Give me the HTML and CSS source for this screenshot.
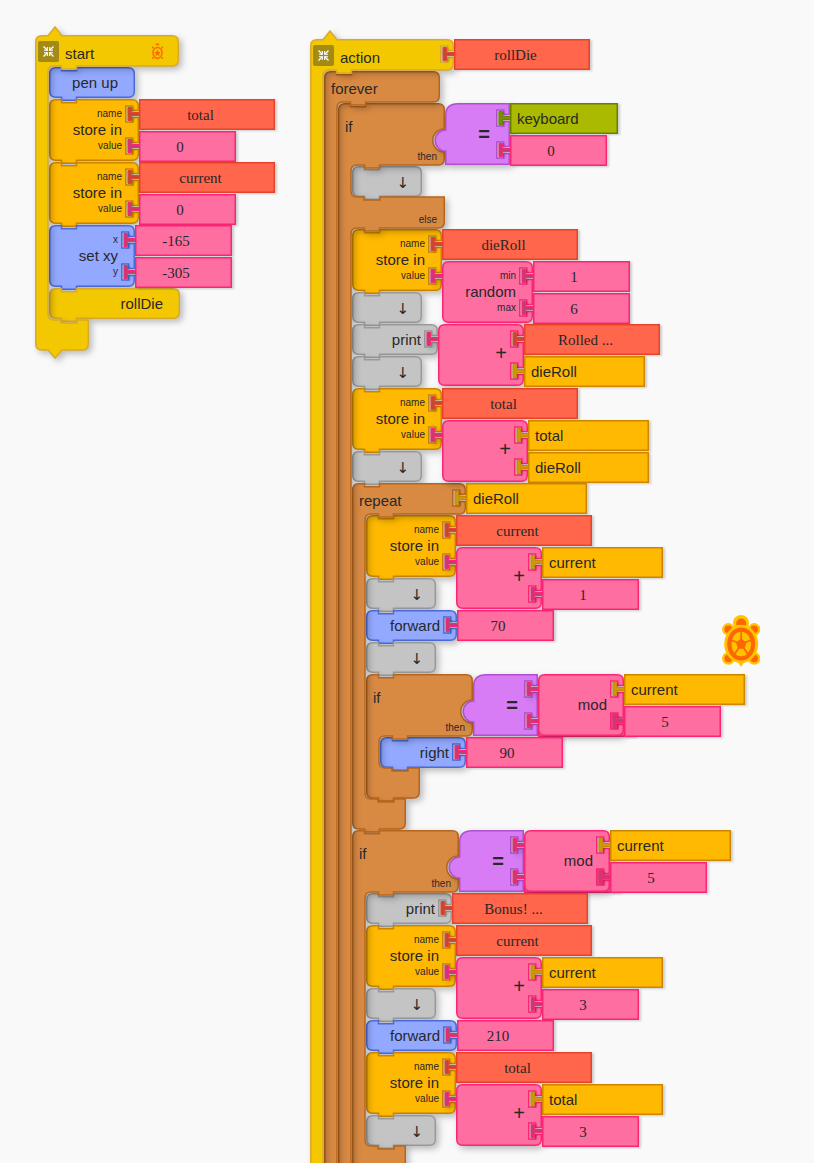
FILE: index.html
```html
<!DOCTYPE html>
<html lang="en">
<head>
<meta charset="utf-8">
<title>Block program</title>
<link rel="stylesheet" href="styles.css">
</head>
<body>
<svg class="defs" aria-hidden="true">
  <symbol id="shrink" viewBox="0 0 21 21">
    <path d="M5.500 5.500l4 4M15.500 5.500l-4 4M5.500 15.500l4-4M15.500 15.500l-4-4" stroke="#fff" stroke-width="1.300" fill="none"/>
    <path d="M9.300 6v3.300H6M11.700 6v3.300H15M9.300 15v-3.300H6M11.700 15v-3.300H15" stroke="#fff" stroke-width="1.100" fill="none"/>
  </symbol>
  <symbol id="mini-turtle" viewBox="0 0 38 52">
    <g fill="#ff6a00">
      <path d="M13 7a6 6 0 0 1 12 0z"/>
      <circle cx="4.500" cy="13.500" r="3"/><circle cx="33.500" cy="13.500" r="3"/>
      <circle cx="4.500" cy="46" r="3"/><circle cx="33.500" cy="46" r="3"/>
      <path d="M16 47h6l-3 5z"/>
    </g>
    <ellipse cx="19" cy="30" rx="14" ry="16.500" fill="none" stroke="#ff6a00" stroke-width="4.500"/>
    <path d="M19 21l3 6 6 1-4 5 1 7-6-3-6 3 1-7-4-5 6-1z" fill="#ff6a00"/>
  </symbol>
</svg>

<main class="canvas">
  <section class="program program-start">
    <div class="clamp hat gold">
      <div class="head block">
        <div class="face top w144">
          <button class="fold" type="button" aria-label="Collapse start"><svg><use href="#shrink"/></svg></button>
          <span>start</span>
          <svg class="mark" aria-hidden="true"><use href="#mini-turtle"/></svg>
        </div>
      </div>
      <div class="stack">
        <div class="block blue"><div class="face w86">pen up</div></div>
        <div class="block tall amber"><div class="face w90"><small>name</small><span>store in</span><small>value</small></div>
          <div class="args"><div class="value text"><span>total</span></div><div class="value number"><span>0</span></div></div></div>
        <div class="block tall amber"><div class="face w90"><small>name</small><span>store in</span><small>value</small></div>
          <div class="args"><div class="value text"><span>current</span></div><div class="value number"><span>0</span></div></div></div>
        <div class="block tall blue"><div class="face w86"><small>x</small><span>set xy</span><small>y</small></div>
          <div class="args"><div class="value number"><span>-165</span></div><div class="value number"><span>-305</span></div></div></div>
        <div class="block gold"><div class="face w131">rollDie</div></div>
      </div>
      <div class="foot"></div>
    </div>
  </section>

  <section class="program program-action">
    <div class="clamp hat gold">
      <div class="head block">
        <div class="face top w144">
          <button class="fold" type="button" aria-label="Collapse action"><svg><use href="#shrink"/></svg></button>
          <span>action</span>
        </div>
        <div class="args"><div class="value text"><span>rollDie</span></div></div>
      </div>
      <div class="stack">
        <div class="clamp brown">
          <div class="head block"><div class="face flow w116">forever</div></div>
          <div class="stack">
            <div class="clamp brown">
              <div class="head block tall"><div class="face cond w107"><span>if</span><small>then</small></div>
                <div class="args"><div class="block tall logic purple"><div class="face w65 sign">=</div>
                  <div class="args"><div class="value sensor"><span>keyboard</span></div><div class="value number"><span>0</span></div></div></div></div></div>
              <div class="stack">
                <div class="block grey short"><div class="face w70 arrow">↓</div></div>
              </div>
              <div class="mid block"><div class="face w107"><small>else</small></div></div>
              <div class="stack">
                <div class="block tall amber"><div class="face w90"><small>name</small><span>store in</span><small>value</small></div>
                  <div class="args"><div class="value text"><span>dieRoll</span></div>
                    <div class="block tall pink"><div class="face w91"><small>min</small><span>random</span><small>max</small></div>
                      <div class="args"><div class="value number"><span>1</span></div><div class="value number"><span>6</span></div></div></div></div></div>
                <div class="block grey"><div class="face w70 arrow">↓</div></div>
                <div class="block grey"><div class="face w86">print</div>
                  <div class="args"><div class="block tall pink"><div class="face w86 plus">+</div>
                    <div class="args"><div class="value text"><span>Rolled ...</span></div><div class="value box"><span>dieRoll</span></div></div></div></div></div>
                <div class="block grey"><div class="face w70 arrow">↓</div></div>
                <div class="block tall amber"><div class="face w90"><small>name</small><span>store in</span><small>value</small></div>
                  <div class="args"><div class="value text"><span>total</span></div>
                    <div class="block tall pink"><div class="face w86 plus">+</div>
                      <div class="args"><div class="value box"><span>total</span></div><div class="value box"><span>dieRoll</span></div></div></div></div></div>
                <div class="block grey"><div class="face w70 arrow">↓</div></div>
                <div class="clamp brown">
                  <div class="head block"><div class="face flow w114">repeat</div>
                    <div class="args"><div class="value box"><span>dieRoll</span></div></div></div>
                  <div class="stack">
                    <div class="block tall amber"><div class="face w90"><small>name</small><span>store in</span><small>value</small></div>
                      <div class="args"><div class="value text"><span>current</span></div>
                        <div class="block tall pink"><div class="face w86 plus">+</div>
                          <div class="args"><div class="value box"><span>current</span></div><div class="value number"><span>1</span></div></div></div></div></div>
                    <div class="block grey"><div class="face w70 arrow">↓</div></div>
                    <div class="block blue"><div class="face w91">forward</div>
                      <div class="args"><div class="value number"><span>70</span></div></div></div>
                    <div class="block grey"><div class="face w70 arrow">↓</div></div>
                    <div class="clamp brown">
                      <div class="head block tall"><div class="face cond w107"><span>if</span><small>then</small></div>
                        <div class="args"><div class="block tall logic purple"><div class="face w65 sign">=</div>
                          <div class="args"><div class="block tall pink"><div class="face w86">mod</div>
                            <div class="args"><div class="value box"><span>current</span></div><div class="value number"><span>5</span></div></div></div>
                            <div class="value number"></div></div></div></div></div>
                      <div class="stack">
                        <div class="block blue short"><div class="face w86">right</div>
                          <div class="args"><div class="value number"><span>90</span></div></div></div>
                      </div>
                      <div class="foot"></div>
                    </div>
                  </div>
                  <div class="foot"></div>
                </div>
                <div class="clamp brown">
                  <div class="head block tall"><div class="face cond w107"><span>if</span><small>then</small></div>
                    <div class="args"><div class="block tall logic purple"><div class="face w65 sign">=</div>
                      <div class="args"><div class="block tall pink"><div class="face w86">mod</div>
                        <div class="args"><div class="value box"><span>current</span></div><div class="value number"><span>5</span></div></div></div>
                        <div class="value number"></div></div></div></div></div>
                  <div class="stack">
                    <div class="block grey"><div class="face w86">print</div>
                      <div class="args"><div class="value text"><span>Bonus! ...</span></div></div></div>
                    <div class="block tall amber"><div class="face w90"><small>name</small><span>store in</span><small>value</small></div>
                      <div class="args"><div class="value text"><span>current</span></div>
                        <div class="block tall pink"><div class="face w86 plus">+</div>
                          <div class="args"><div class="value box"><span>current</span></div><div class="value number"><span>3</span></div></div></div></div></div>
                    <div class="block grey"><div class="face w70 arrow">↓</div></div>
                    <div class="block blue"><div class="face w91">forward</div>
                      <div class="args"><div class="value number"><span>210</span></div></div></div>
                    <div class="block tall amber"><div class="face w90"><small>name</small><span>store in</span><small>value</small></div>
                      <div class="args"><div class="value text"><span>total</span></div>
                        <div class="block tall pink"><div class="face w86 plus">+</div>
                          <div class="args"><div class="value box"><span>total</span></div><div class="value number"><span>3</span></div></div></div></div></div>
                    <div class="block grey short"><div class="face w70 arrow">↓</div></div>
                  </div>
                  <div class="foot"></div>
                </div>
              </div>
              <div class="foot"></div>
            </div>
          </div>
          <div class="foot"></div>
        </div>
      </div>
      <div class="foot"></div>
    </div>
  </section>

  <svg class="turtle" viewBox="0 0 38 53" role="img" aria-label="Turtle">
    <g fill="#ffc300">
      <circle cx="19" cy="9" r="8"/>
      <circle cx="6.300" cy="15.300" r="6.200"/><circle cx="32.200" cy="15.300" r="6.200"/>
      <circle cx="6.300" cy="44.500" r="6.200"/><circle cx="32.200" cy="44.500" r="6.200"/>
      <path d="M15 47h8l-4 6z"/>
    </g>
    <g fill="#ff6600">
      <circle cx="19.200" cy="9.500" r="5"/>
      <circle cx="6.300" cy="15.300" r="3.800"/><circle cx="32.200" cy="15.300" r="3.800"/>
      <circle cx="6.300" cy="44.500" r="3.800"/><circle cx="32.200" cy="44.500" r="3.800"/>
    </g>
    <ellipse cx="19.200" cy="30" rx="17" ry="19.200" fill="#ffc300"/>
    <ellipse cx="19.200" cy="30" rx="14" ry="16.600" fill="#ff6600"/>
    <ellipse cx="19.200" cy="30" rx="9.800" ry="12.200" fill="#ffc300"/>
    <path d="M19.200 24.500l5.200 4-2 6.200h-6.400l-2-6.200z" fill="#ff6600"/>
    <path d="M19.200 30V17M19.200 30L9 26M19.200 30l10.200-4M19.200 30l-6.500 10M19.200 30l6.500 10" stroke="#ff6600" stroke-width="1.700"/>
  </svg>
</main>
<script src="outlines.js"></script>
</body>
</html>
```

FILE: styles.css
```css
* { box-sizing: border-box; }

body {
  margin: 0;
  background: #f9f9f9;
  color: #282828;
  font: 15px/18px "Liberation Sans", Arial, sans-serif;
}

.defs { position: absolute; width: 0; height: 0; }

.canvas {
  position: relative;
  height: 100vh;
  overflow: hidden;
}

/* Stacks and the turtle sit freely on the canvas. */
.program { position: absolute; width: max-content; }
.program-start { left: 35px; top: 35px; }
.program-action { left: 310px; top: 39px; }
.turtle { position: absolute; left: 722px; top: 614px; width: 38px; height: 53px; }

/* Palette */
.gold { --fill: #f3c800; --line: #d8a92c; }
.amber { --fill: #ffb900; --line: #c98500; }
.blue { --fill: #92a9ff; --line: #4a6bd9; }
.brown { --fill: #d88a43; --line: #b5651d; }
.grey { --fill: #c4c4c4; --line: #999; }
.purple { --fill: #d77cf5; --line: #b04fd0; }
.pink, .number { --fill: #ff6ea1; --line: #fb2576; --dark: #c93a72; }
.text { --fill: #ff664b; --line: #e8432a; --dark: #c24a35; }
.box { --fill: #ffb900; --line: #cc8600; --dark: #c99a10; }
.sensor { --fill: #a9ba00; --line: #6c8000; --dark: #7d8f00; }

/* Blocks */
.block {
  display: flex;
  align-items: flex-start;
  position: relative;
  height: 32px;
}
.short { height: 31px; }
.tall { height: 63px; }

.face {
  position: relative;
  z-index: 1;
  flex: none;
  display: flex;
  flex-direction: column;
  justify-content: center;
  align-items: flex-end;
  height: 31px;
  padding-right: 17px;
  white-space: nowrap;
}
.tall > .face { height: 61px; }
.face small { font-size: 10px; line-height: 12px; }
.face small + span { line-height: 20px; }

.face.top {
  flex-direction: row;
  align-items: center;
  justify-content: flex-start;
  gap: 6px;
  padding: 0 15px 0 3px;
  height: 33px;
}
.top span { padding-top: 5px; }
.face.flow { align-items: flex-start; padding: 4px 0 0 7px; }
.face.cond { justify-content: space-between; align-items: stretch; padding: 15px 8px 1px 7px; }
.cond small { text-align: right; }
.mid .face { padding: 14px 8px 0 0; }
.face.sign { font-size: 20px; font-weight: bold; padding-right: 20px; }
.face.plus { font-size: 20px; padding: 0 17px 4px 0; }
.face.arrow { font: 15px/18px "DejaVu Sans", sans-serif; padding: 2px 13px 0 0; }

.w65 { width: 65px; }
.w70 { width: 70px; }
.w86 { width: 86px; }
.w90 { width: 90px; }
.w91 { width: 91px; }
.w107 { width: 107px; }
.w114 { width: 114px; }
.w116 { width: 116px; }
.w131 { width: 131px; }
.w144 { width: 144px; }

.args {
  position: relative;
  z-index: 1;
  flex: none;
  display: grid;
  grid-template-rows: 32px 31px;
  align-items: start;
}
.args > .tall { z-index: 1; }

.value {
  position: relative;
  z-index: 0;
  display: flex;
  align-items: center;
  height: 31px;
}
.text, .number {
  justify-content: center;
  padding-right: 13px;
  font-family: "Liberation Serif", "Times New Roman", serif;
}
.text { width: 136px; }
.number { width: 97px; padding-right: 15px; }
.box { width: 121px; padding-left: 7px; }
.sensor { width: 108px; padding-left: 7px; }

/* Clamps */
.clamp { position: relative; }
.stack { padding-left: 14px; }
.foot { width: 54px; height: 31px; }

.fold {
  width: 21px;
  height: 21px;
  padding: 0;
  border: 0;
  border-radius: 2px;
  background: #a38a14;
}
.fold svg { display: block; width: 21px; height: 21px; }
.mark { width: 13px; height: 17px; margin-left: auto; }

.outline {
  position: absolute;
  left: 0;
  top: 0;
  width: 1px;
  height: 1px;
  overflow: visible;
  pointer-events: none;
  filter: drop-shadow(3px 3px 3px rgb(0 0 0 / 25%));
}
.value > .outline { z-index: -1; filter: drop-shadow(2px 1px 1px rgb(0 0 0 / 18%)); }
.outline path { fill: var(--fill); stroke: var(--line); stroke-width: 1.5px; }
.outline .plug { fill: var(--dark, var(--fill)); stroke-width: 1px; }
```

FILE: outlines.js
```js
// Draws the jigsaw outline of every block from its laid-out size.
const NS = "http://www.w3.org/2000/svg";
const E = 0.75;  // half of the line width
const R = 6;     // corner radius

const addOutline = (el, d, plug, last) => {
  const svg = document.createElementNS(NS, "svg");
  svg.setAttribute("class", "outline");
  svg.setAttribute("aria-hidden", "true");
  const add = (path, cls) => {
    const p = document.createElementNS(NS, "path");
    p.setAttribute("d", path);
    if (cls) p.setAttribute("class", cls);
    svg.append(p);
  };
  if (plug) add("M1 13.500H-7.500V8.500H-11V21.500H-7.500V16.500H1", "plug");
  add(d);
  if (last) el.append(svg); else el.prepend(svg);
};

// Right edge, top to bottom, with a cut for each argument.
const rightEdge = (block, x, y) => {
  const args = block.querySelector(":scope > .args");
  if (!args) return "";
  if (args.firstElementChild.classList.contains("logic")) {
    return `V${y + 26}A11.500 11.500 0 0 0 ${x} ${y + 49}`;
  }
  return [...args.children].map((_, i) => {
    const c = y + 15 + 32 * i;
    return `V${c - 3.5}H${x - 5.5}V${c - 8}H${x - 12.5}V${c + 8}H${x - 5.5}V${c + 3.5}H${x}`;
  }).join("");
};

const notch = (x, y) => `H${x + 12.5}V${y + 3}H${x + 27.5}V${y}`;
const tab = (x, y) => `H${x + 27.5}V${y + 3}H${x + 12.5}V${y}`;

document.querySelectorAll(".value").forEach(el => {
  addOutline(el, `M${E} ${E}H${el.offsetWidth - E}V${31 - E}H${E}Z`, true);
});

document.querySelectorAll(".block:not(.head):not(.mid)").forEach(el => {
  const w = el.querySelector(".face").offsetWidth - E;
  const h = el.classList.contains("tall") ? 62 : 31;
  const b = h - E;
  if (el.classList.contains("logic")) {
    addOutline(el, `M${E} 12Q${E} ${E} 13 ${E}H${w}${rightEdge(el, w, 0)}V${b}H${E}V48A10.500 10.500 0 0 1 ${E} 27Z`);
    return;
  }
  const isArg = el.parentElement.classList.contains("args");
  const top = isArg ? "" : notch(0, E);
  const bottom = isArg ? "" : tab(0, b);
  addOutline(el, `M${E} ${E + R}Q${E} ${E} ${E + R} ${E}${top}H${w - R}Q${w} ${E} ${w} ${E + R}` +
    `${rightEdge(el, w, 0)}V${b - R}Q${w} ${b} ${w - R} ${b}${bottom}H${E + R}Q${E} ${b} ${E} ${b - R}Z`, isArg);
});

document.querySelectorAll(".clamp").forEach(el => {
  const hat = el.classList.contains("hat");
  const arm = 13;
  let d = `M${E} ${E + R}Q${E} ${E} ${E + R} ${E}`;
  d += hat ? `H13L20 -8L27 ${E}` : notch(0, E);
  [...el.children].forEach(part => {
    const top = part.offsetTop;
    const bottom = top + part.offsetHeight;
    if (part.classList.contains("stack")) {
      d += `${tab(arm + 1, top - 1)}H${arm + R}Q${arm} ${top - 1} ${arm} ${top - 1 + R}` +
        `V${bottom - R}Q${arm} ${bottom} ${arm + R} ${bottom}H${arm + 13}V${bottom + 3}H${arm + 29}V${bottom}`;
      return;
    }
    const face = part.querySelector(":scope > .face") || part;
    const w = face.offsetWidth - E;
    const b = bottom - 1;
    d += part.classList.contains("head")
      ? `H${w - R}Q${w} ${E} ${w} ${E + R}${rightEdge(part, w, top)}`
      : `H${w}`;
    d += `V${b - R}Q${w} ${b} ${w - R} ${b}`;
    if (part.classList.contains("foot")) {
      d += hat ? `H27L20 ${b + 8}L13 ${b}` : tab(0, b);
      d += `H${E + R}Q${E} ${b} ${E} ${b - R}Z`;
    }
  });
  addOutline(el, d, false, true);
});
```
